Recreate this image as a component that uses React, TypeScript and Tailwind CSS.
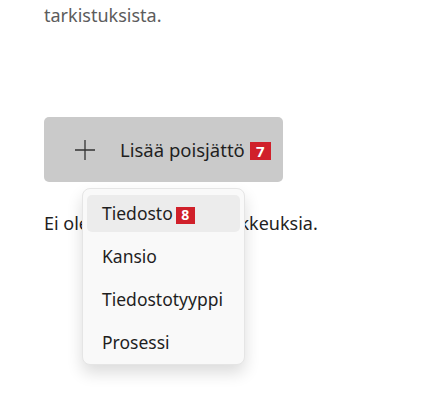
const font = { fontFamily: '"Noto Sans", "Open Sans", sans-serif' }

const menuItems = ["Tiedosto", "Kansio", "Tiedostotyyppi", "Prosessi"]

function Badge({ n, size }: { n: string; size: string }) {
  return (
    <span className={`inline-flex items-center justify-center bg-[#d0202a] text-white font-bold leading-none ${size}`}>
      {n}
    </span>
  )
}

export default function App() {
  return (
    <div className="w-[422px] h-[401px] bg-white overflow-hidden text-[18px]" style={font}>
      <div className="px-[44px]">
        <p className="mt-[3px] leading-[24px] text-[#5c5c5c]">tarkistuksista.</p>

        <div className="relative mt-[90px]">
          <button className="flex items-center w-[239px] h-[65px] rounded-[5px] bg-[#cacaca] text-[#1f1f1f] text-[18.5px]">
            <svg width="22" height="22" viewBox="0 0 22 22" className="ml-[30px]">
              <path d="M11 1v20M1 11h20" stroke="#333" strokeWidth="1.3" />
            </svg>
            <span className="ml-[24px]">Lisää poisjättö</span>
            <span className="ml-[5px]"><Badge n="7" size="w-[21px] h-[18px] text-[15px]" /></span>
          </button>

          <p className="mt-[29px] leading-[24px] text-[#1f1f1f]">Ei ole poisjättöjä tai poikkeuksia.</p>

          <div className="absolute left-[38px] top-[71px] w-[163px] rounded-[8px] bg-[#f9f9f9] border border-[#e5e5e5] shadow-[0_8px_16px_rgba(0,0,0,0.14)] px-[4px] pt-[6px] pb-[3px] flex flex-col gap-[6px] text-[17.5px]">
            {menuItems.map((item, i) => (
              <div
                key={item}
                className={`h-[37px] shrink-0 flex items-center pl-[15px] rounded-[5px] text-[#1f1f1f] ${i === 0 ? "bg-[#ececec]" : ""}`}
              >
                {item}
                {i === 0 && <span className="ml-[3px]"><Badge n="8" size="w-[19px] h-[17px] text-[14px]" /></span>}
              </div>
            ))}
          </div>
        </div>
      </div>
    </div>
  )
}
